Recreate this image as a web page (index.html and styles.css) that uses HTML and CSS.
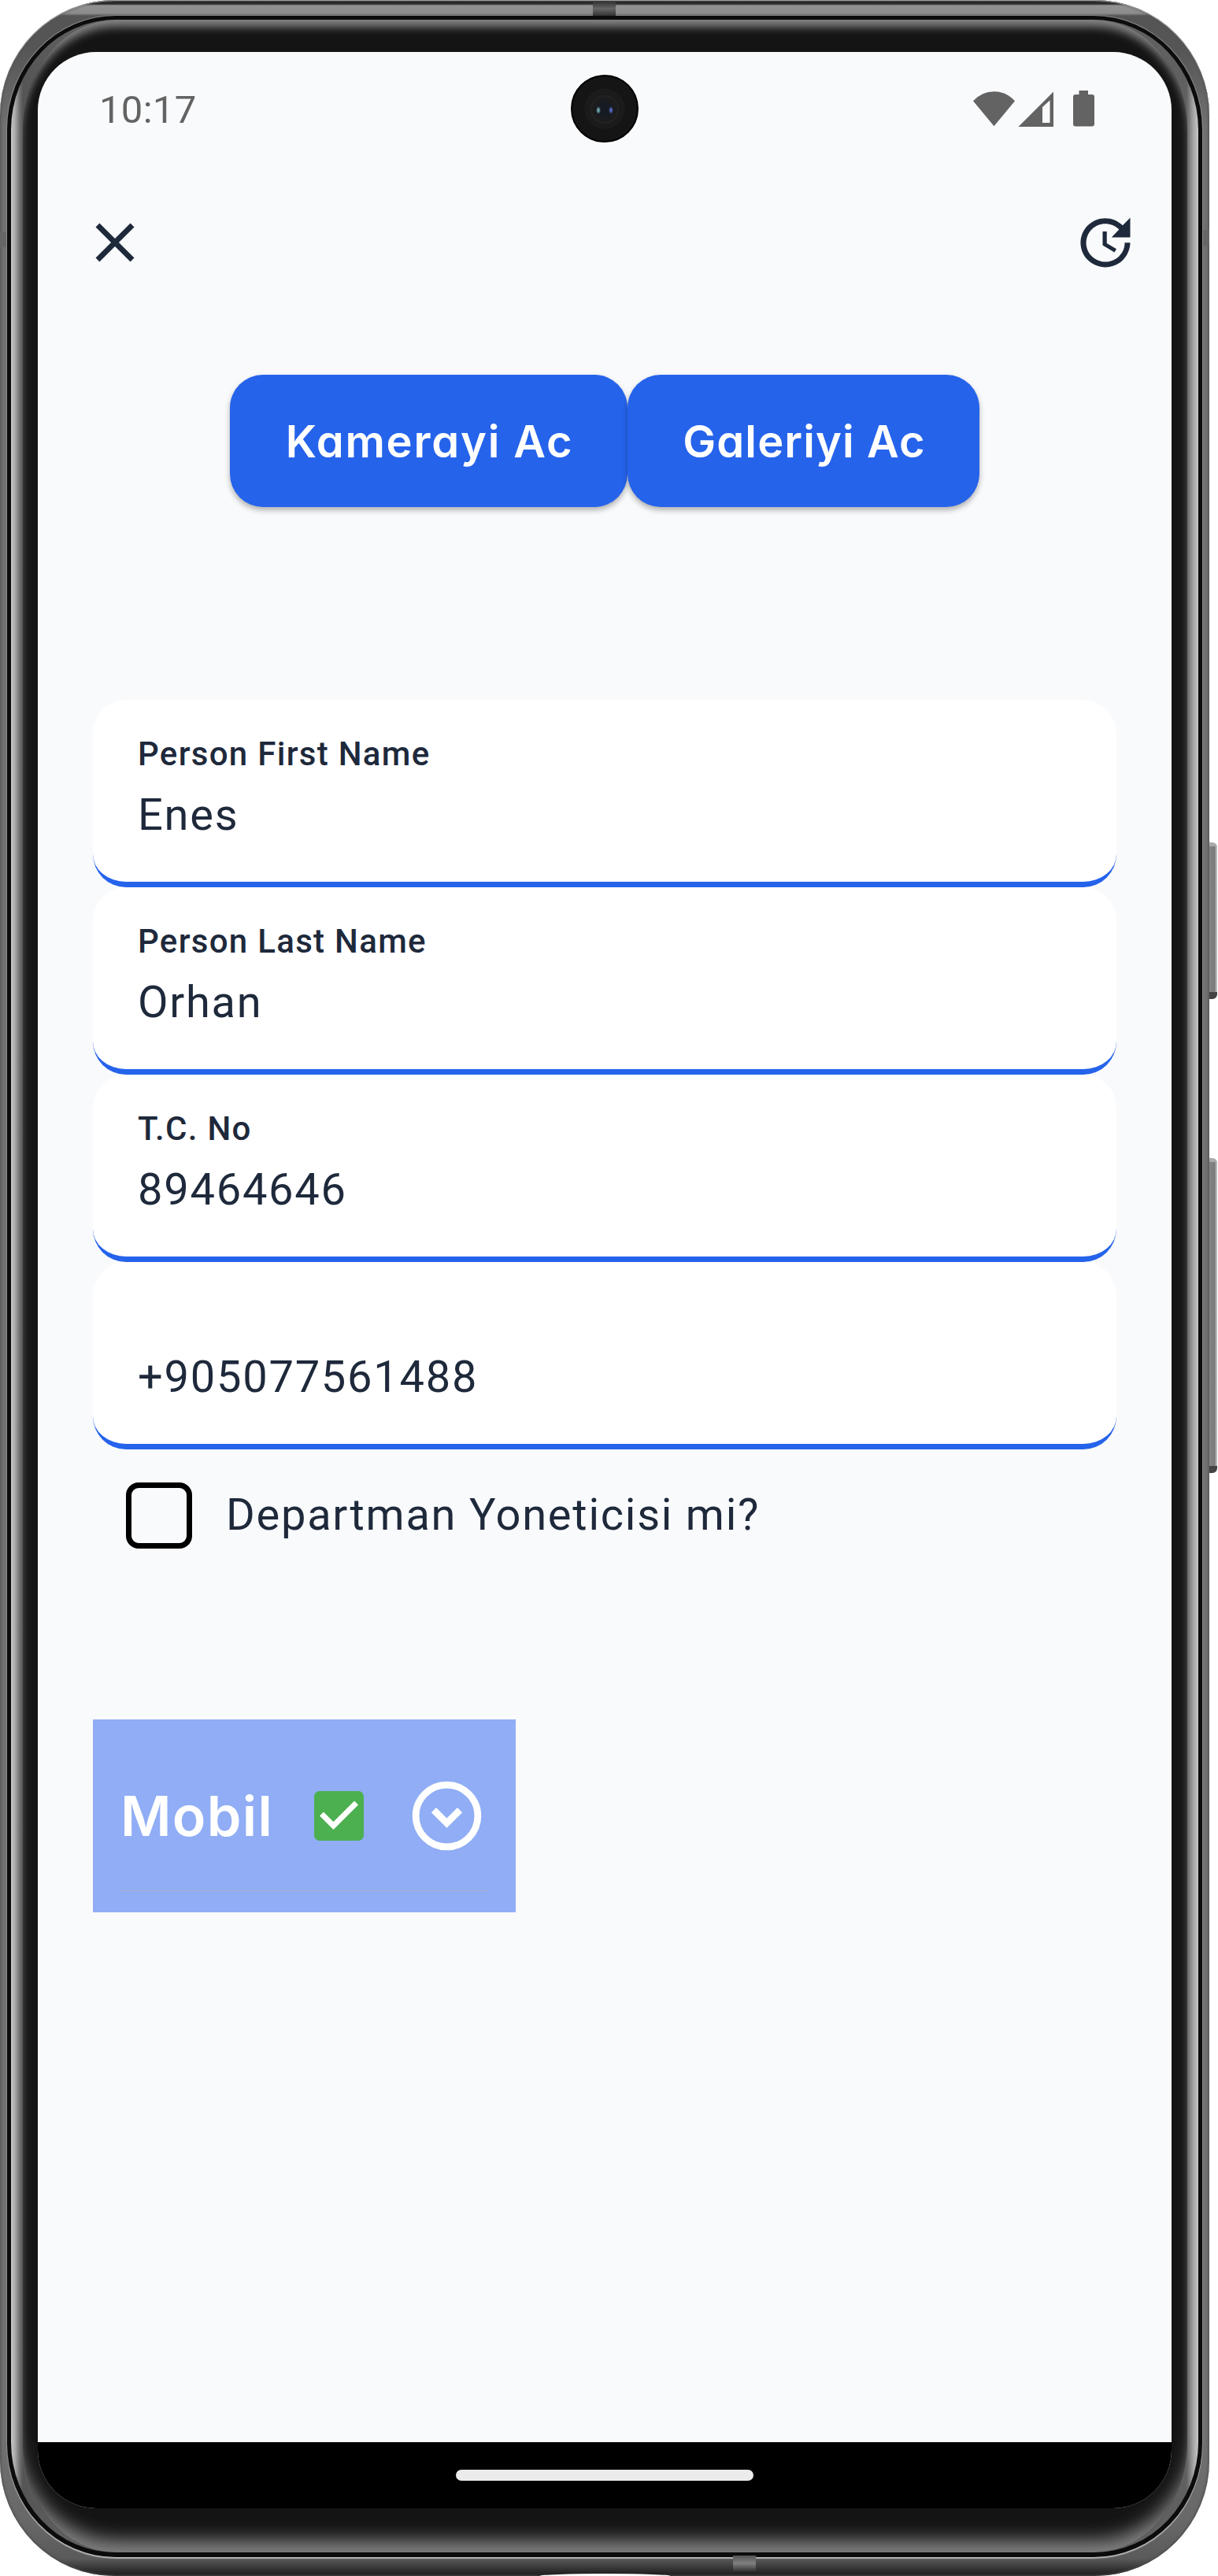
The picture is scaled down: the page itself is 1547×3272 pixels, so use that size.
FILE: index.html
```html
<!DOCTYPE html>
<html lang="tr">
<head>
<meta charset="utf-8">
<title>Person</title>
<link rel="stylesheet" href="styles.css">
</head>
<body>
<div class="phone">
  <i class="key key-power"></i>
  <i class="key key-volume"></i>
  <div class="frame">
    <i class="antenna antenna-top"></i>
    <i class="antenna antenna-bottom"></i>
    <i class="antenna antenna-left"></i>
    <i class="antenna antenna-right"></i>
    <i class="port"></i>
    <div class="groove"><div class="edge"><div class="bezel">
      <div class="screen">
        <div class="camera"><i class="lens"></i></div>
        <header class="status">
          <span class="clock">10:17</span>
          <svg class="status-icons" width="156" height="48" viewBox="1235 114 156 48" fill="#636363">
            <path d="M1262.500 160.300L1236 128.300Q1247 116.300 1262.500 116.300T1289 128.300Z"/>
            <path fill-rule="evenodd" d="M1293.500 161L1338 116.500V161ZM1324 136V156H1333.500V127.500Z"/>
            <path d="M1370.500 115h11.500v5h5a3 3 0 0 1 3 3v34.600a3 3 0 0 1-3 3h-21a3 3 0 0 1-3-3V123a3 3 0 0 1 3-3h4.500z"/>
          </svg>
        </header>
        <nav class="toolbar">
          <svg class="tool" viewBox="0 0 24 24"><path d="M19 6.410L17.590 5 12 10.590 6.410 5 5 6.410 10.590 12 5 17.590 6.410 19 12 13.410 17.590 19 19 17.590 13.410 12z"/></svg>
          <svg class="tool" viewBox="0 0 24 24"><path d="M21 10.120h-6.780l2.740-2.820c-2.730-2.700-7.150-2.800-9.880-.1-2.730 2.710-2.730 7.080 0 9.790s7.150 2.710 9.880 0C18.320 15.650 19 14.080 19 12.100h2c0 1.980-.88 4.550-2.640 6.290-3.510 3.480-9.210 3.480-12.720 0-3.500-3.470-3.530-9.110-.02-12.580s9.140-3.470 12.650 0L21 3v7.120zM12.500 8v4.250l3.500 2.080-.72 1.210L11 13V8h1.500z"/></svg>
        </nav>
        <div class="actions">
          <button class="action action-camera"><span>Kamerayi Ac</span></button>
          <button class="action action-gallery"><span>Galeriyi Ac</span></button>
        </div>
        <main class="form">
          <div class="field"><span class="label">Person First Name</span><span class="value">Enes</span></div>
          <div class="field"><span class="label">Person Last Name</span><span class="value">Orhan</span></div>
          <div class="field"><span class="label">T.C. No</span><span class="value">89464646</span></div>
          <div class="field"><span class="label"></span><span class="value">+905077561488</span></div>
          <div class="check-row"><i class="box"></i><span class="value">Departman Yoneticisi mi?</span></div>
          <div class="department">
            <div class="department-row">
              <span class="department-name">Mobil</span>
              <svg class="tick" viewBox="3 3 18 18"><rect x="3" y="3" width="18" height="18" rx="2" fill="#4caf50"/><path fill="#fff" d="M10 17l-5-5 1.410-1.410L10 14.170l7.590-7.590L19 8z"/></svg>
              <svg class="expand" viewBox="0 0 24 24"><circle cx="12" cy="12" r="9" fill="none" stroke="#fff" stroke-width="2"/><path fill="#fff" d="M15.080 9.590L12 12.670 8.920 9.590 7.500 11l4.500 4.500 4.500-4.500z"/></svg>
            </div>
          </div>
        </main>
        <footer class="navbar"><i class="pill"></i></footer>
      </div>
    </div></div></div>
  </div>
</div>
</body>
</html>
```
FILE: styles.css
```css
* { box-sizing: border-box; }
body { margin: 0; background: #fff; font-family: Roboto, "Liberation Sans", sans-serif; color: #1e293b; }
i { display: block; }

/* device shell */
.phone { position: relative; width: 1547px; height: 3272px; overflow: hidden; }
.frame {
  position: relative; width: 1536px; height: 3272px; padding: 20px 9px 24px; border-radius: 146px;
  background: linear-gradient(180deg, #2a2a2a 0, #2a2a2a 5px, #929292 7px, #8c8c8c 17px, #555 20px, #555 60px, #707070 160px, #707070 3100px, #686868 3200px, #5a5a5a 3250px, #1c1c1c 3271px);
  box-shadow: inset 0 1px 1px #aab0ad, inset 0 0 3px 1px #4a4a4a;
}
.groove {
  height: 3228px; padding: 5px 5px 6px; border-radius: 138px / 144px;
  background: #0c0c0c; box-shadow: 0 2px 1px #b5b5b5, 0 0 0 1px #8a8a8a;
}
.edge {
  height: 3217px; padding: 0 14px 0 15px; border-radius: 132px / 140px;
  background: linear-gradient(90deg, #c8c8c8 0, #aaa 5px, #707070 11px, #555 15px, #606060 80px, #606060 1493px, #a0a0a0 1501px, #c8c8c8 1508px);
}
.bezel {
  height: 3217px; padding: 41px 20px 0 19px; border-radius: 118px / 140px; background: #141414;
  box-shadow: inset 0 14px 12px -5px #858585, inset 0 -26px 22px -10px #808080;
}
.antenna { position: absolute; }
.antenna-top { left: 753px; top: 2px; width: 29px; height: 18px; background: linear-gradient(#333, #666 50%, #333); }
.antenna-bottom { left: 931px; top: 3246px; width: 29px; height: 20px; background: linear-gradient(#555, #808080 50%, #333); }
.antenna-left { left: 0; top: 295px; width: 8px; height: 19px; background: #666; }
.antenna-right { left: 1528px; top: 292px; width: 8px; height: 20px; background: #666; }
.port { position: absolute; left: 686px; top: 3269px; width: 165px; height: 6px; border-radius: 50%; background: #fff; }
.key { position: absolute; left: 1532px; width: 14px; border-radius: 3px 6px 6px 3px; background: linear-gradient(90deg, #555, #858585 30%, #7a7a7a 75%, #ccc); border-top: 5px solid #aaa; border-bottom: 9px solid #444; }
.key-power { top: 1070px; height: 199px; }
.key-volume { top: 1471px; height: 400px; }

/* screen */
.screen { position: relative; display: flex; flex-direction: column; width: 1440px; height: 3120px; border-radius: 74px; overflow: hidden; background: #f9fafc; }
.camera { position: absolute; left: 677px; top: 29px; width: 86px; height: 86px; border-radius: 50%; border: 2px solid #000; background: radial-gradient(circle, #1b1b1b 0 25px, #151515 26px); }
.lens { width: 36px; height: 36px; margin: 24px auto 0; border-radius: 50%; border: 2px solid #222; background: radial-gradient(ellipse 3px 5px at 8px 17px, #6aa8a8 30%, transparent), radial-gradient(ellipse 3px 5px at 24px 17px, #5666c0 30%, transparent), radial-gradient(circle, #161a22 8px, #1c1c1c 14px); }
.status { display: flex; justify-content: space-between; align-items: center; height: 144px; padding: 0 97px 0 78px; }
.clock { padding-top: 4px; font-size: 49px; line-height: 58px; letter-spacing: .3px; color: #636363; }
.toolbar { display: flex; justify-content: space-between; align-items: center; height: 196px; padding: 0 42px 0 56px; }
.tool { width: 84px; height: 84px; fill: #1e293b; }
.actions { display: flex; justify-content: center; margin-top: 70px; }
.action {
  height: 168px; border: 0; padding: 2px 0 0; border-radius: 42px; background: #2563eb; color: #fff;
  font: 600 56px/84px Inter, "Open Sans", sans-serif; font-feature-settings: "cv11";
  box-shadow: 0 4px 7px rgba(0,0,0,.3);
}
.action-camera { width: 505px; padding-left: 2px; letter-spacing: 1.8px; }
.action-gallery { width: 447px; padding-left: 2px; letter-spacing: 1.1px; }
.form { padding: 245px 70px 0; }
.field { display: flex; flex-direction: column; height: 238px; padding: 41px 57px 0; border-bottom: 7px solid #2563eb; border-radius: 42px; background: #fff; }
.label { height: 56px; font-size: 42px; line-height: 56px; font-weight: 500; letter-spacing: 1.3px; }
.value { height: 84px; margin-top: 7px; font-size: 56px; line-height: 84px; letter-spacing: 1.75px; }
.check-row { display: flex; align-items: center; gap: 43px; height: 168px; padding-left: 42px; }
.check-row .value { margin: -2px 0 0; }
.box { width: 84px; height: 84px; border: 7px solid #000; border-radius: 16px; }
.department { width: 537px; height: 245px; margin-top: 175px; padding: 0 35px; background: #90adf5; }
.department-row { display: flex; align-items: center; height: 218px; padding-top: 28px; border-bottom: 1px solid #a9b3c6; }
.department-name { width: 246px; font: 600 70px/105px Inter, "Open Sans", sans-serif; letter-spacing: 1.3px; color: #fff; }
.tick { width: 63px; height: 63px; }
.expand { width: 105px; height: 105px; margin-left: 53px; }
.navbar { display: flex; justify-content: center; align-items: center; height: 84px; margin-top: auto; background: #000; }
.pill { width: 378px; height: 14px; border-radius: 7px; background: #ebebeb; }
```
